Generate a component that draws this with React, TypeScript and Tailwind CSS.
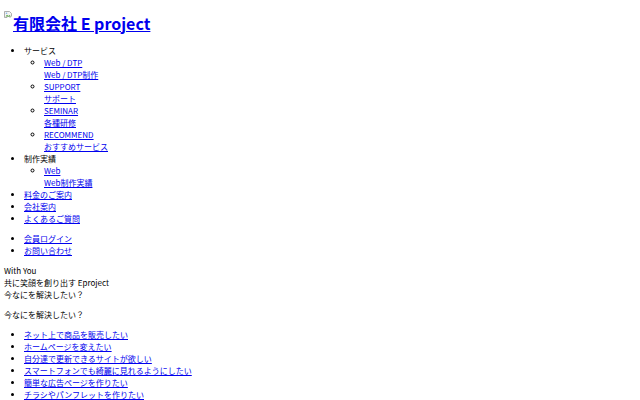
import React from "react";

const link = "text-[#0000ee] underline";

export default function App() {
  const font = { fontFamily: '"Noto Sans CJK JP", "Noto Sans", sans-serif' };
  return (
    <div
      className="min-h-[400px] bg-white px-[4px] text-[8px] leading-[12px] text-black [font-family:'Noto_Sans_CJK_JP','Noto_Sans',sans-serif]"
    >
      <h1 className="mt-[10.5px] mb-[10.5px] text-[16px] font-bold leading-[24px]">
        <a href="#" className={link}>
          <svg
            width="8"
            height="8"
            viewBox="0 0 8 8"
            className="inline-block align-top mt-[0px] mr-[1px]"
          >
            <path d="M0.5 0.5 H5.5 L7.5 2.5 V5 L6 6.5 L4.5 5 L3 6.5 L0.5 6.5 Z" fill="#f4f4f4" stroke="#9a9a9a" strokeWidth="0.8" />
            <path d="M1.5 5.5 L3 3.8 L4.3 5 L5.5 4 L6.5 5 V5.5 Z" fill="#5aa844" />
            <circle cx="2.5" cy="2.3" r="0.8" fill="#7fb6e8" />
          </svg>
          有限会社 E project
        </a>
      </h1>
      <nav>
        <ul className="my-[8px] list-disc pl-[20px]">
          <li>
            サービス
            <ul className="list-[circle] pl-[20px]">
              <li>
                <a href="#" className={link}>Web / DTP<br />Web / DTP制作</a>
              </li>
              <li>
                <a href="#" className={link}>SUPPORT<br />サポート</a>
              </li>
              <li>
                <a href="#" className={link}>SEMINAR<br />各種研修</a>
              </li>
              <li>
                <a href="#" className={link}>RECOMMEND<br />おすすめサービス</a>
              </li>
            </ul>
          </li>
          <li>
            制作実績
            <ul className="list-[circle] pl-[20px]">
              <li>
                <a href="#" className={link}>Web<br />Web制作実績</a>
              </li>
            </ul>
          </li>
          <li><a href="#" className={link}>料金のご案内</a></li>
          <li><a href="#" className={link}>会社案内</a></li>
          <li><a href="#" className={link}>よくあるご質問</a></li>
        </ul>
      </nav>
      <ul className="my-[8px] list-disc pl-[20px]">
        <li><a href="#" className={link}>会員ログイン</a></li>
        <li><a href="#" className={link}>お問い合わせ</a></li>
      </ul>
      <div style={font}>
        <div>With You</div>
        <div>共に笑顔を創り出す Eproject</div>
        <div>今なにを解決したい？</div>
      </div>
      <p className="my-[8px]">今なにを解決したい？</p>
      <ul className="my-[8px] list-disc pl-[20px]">
        <li><a href="#" className={link}>ネット上で商品を販売したい</a></li>
        <li><a href="#" className={link}>ホームページを変えたい</a></li>
        <li><a href="#" className={link}>自分達で更新できるサイトが欲しい</a></li>
        <li><a href="#" className={link}>スマートフォンでも綺麗に見れるようにしたい</a></li>
        <li><a href="#" className={link}>簡単な広告ページを作りたい</a></li>
        <li><a href="#" className={link}>チラシやパンフレットを作りたい</a></li>
      </ul>
    </div>
  );
}
